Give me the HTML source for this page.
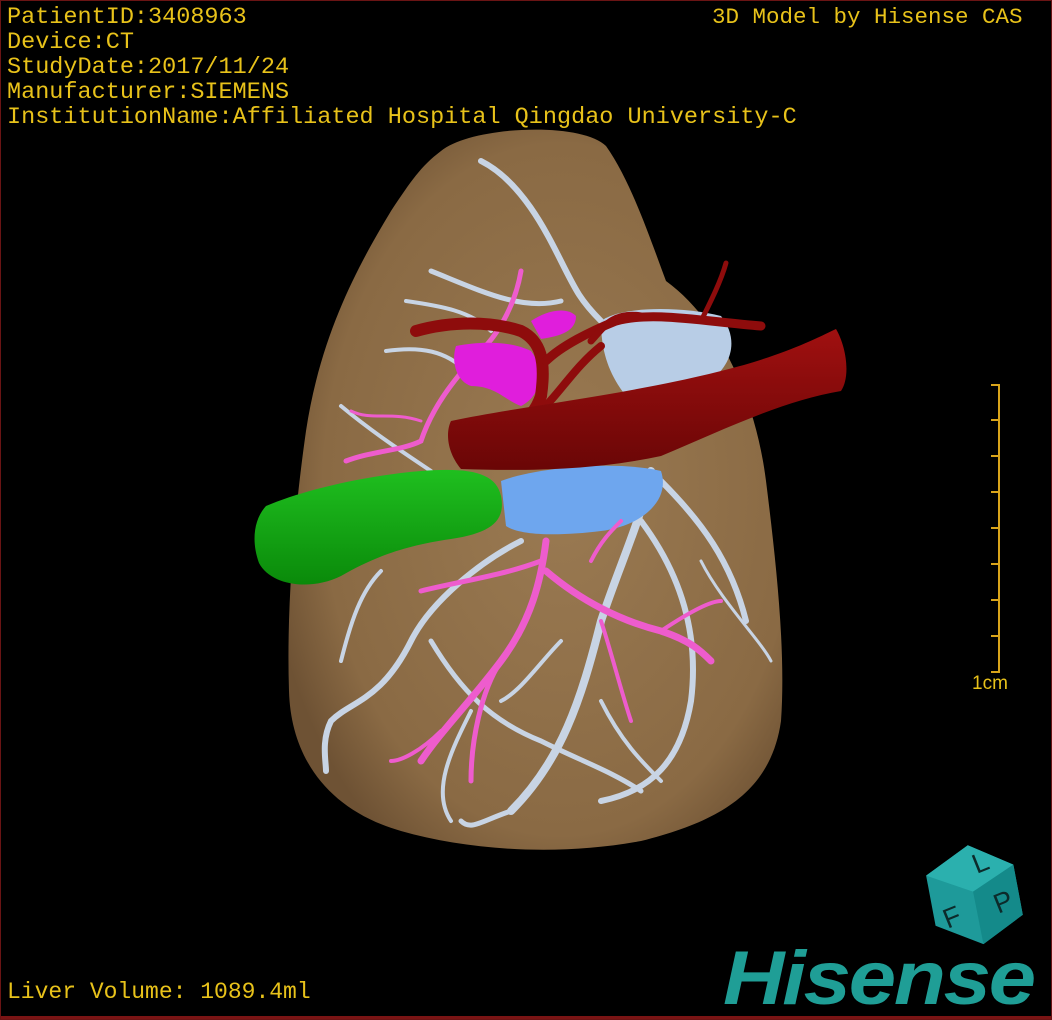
<!DOCTYPE html>
<html><head><meta charset="utf-8"><style>
html,body{margin:0;padding:0;background:#000}
#c{position:relative;width:1052px;height:1020px;background:#000;overflow:hidden;box-sizing:border-box;border:1px solid #6a1414}
.t{position:absolute;color:#e8c21a;font-family:"Liberation Mono",monospace;font-size:23.5px;line-height:25px;white-space:nowrap}
</style></head><body><div id="c">
<svg width="1052" height="1020" style="position:absolute;left:0;top:0">
<defs>
<radialGradient id="lv" cx="0.55" cy="0.5" r="0.6"><stop offset="0" stop-color="#9a7a52"/><stop offset="0.8" stop-color="#8a6a44"/><stop offset="1" stop-color="#6e5234"/></radialGradient>
<linearGradient id="gr" x1="0" y1="0" x2="0" y2="1"><stop offset="0" stop-color="#1fbf1f"/><stop offset="1" stop-color="#0a8a0a"/></linearGradient>
<linearGradient id="rd" x1="0" y1="0" x2="0" y2="1"><stop offset="0" stop-color="#a01010"/><stop offset="1" stop-color="#6a0606"/></linearGradient>
</defs>
<path d="M440,150 C470,125 580,120 605,145 C630,180 650,240 665,280 C720,320 755,400 765,480 C775,560 785,650 780,720 C770,790 720,820 640,840 C560,855 470,850 400,830 C330,810 290,760 288,690 C285,600 295,500 305,430 C320,330 360,260 390,210 C410,180 420,165 440,150 Z" fill="url(#lv)"/>
<g fill="none" stroke="#c8d4e4" stroke-linecap="round">
<path d="M480,160 C520,180 545,230 560,260 C575,290 580,300 600,320" stroke-width="6"/>
<path d="M430,270 C480,290 520,310 560,300" stroke-width="5"/>
<path d="M405,300 C440,305 470,310 490,330" stroke-width="4"/>
<path d="M385,350 C420,345 445,350 465,370" stroke-width="4"/>
<path d="M340,405 C370,430 400,450 430,470" stroke-width="4"/>
<path d="M650,470 C640,520 620,560 600,620 C580,700 560,760 510,810" stroke-width="8"/>
<path d="M660,480 C700,520 730,560 745,620" stroke-width="6"/>
<path d="M640,520 C670,560 700,620 690,700 C680,760 650,790 600,800" stroke-width="6"/>
<path d="M520,540 C480,560 430,600 410,640 C380,700 350,700 330,720 C320,740 325,760 325,770" stroke-width="6"/>
<path d="M430,640 C460,690 490,720 540,740 C580,760 610,770 640,790" stroke-width="5"/>
<path d="M380,570 C360,590 350,620 340,660" stroke-width="4"/>
<path d="M470,710 C450,750 430,790 450,820" stroke-width="4"/>
<path d="M560,640 C540,660 520,690 500,700" stroke-width="4"/>
<path d="M600,700 C620,740 640,760 660,780" stroke-width="4"/>
<path d="M510,810 C480,820 470,830 460,820" stroke-width="5"/>
<path d="M700,560 C720,600 760,640 770,660" stroke-width="3"/>
</g>
<path d="M600,320 C620,305 680,305 720,315 C740,340 730,370 700,385 C670,395 640,400 625,395 C605,370 600,345 600,320 Z" fill="#b8cde6"/>
<path d="M500,480 C540,465 620,460 660,470 C670,500 640,525 600,530 C560,535 520,535 505,525 Z" fill="#6ea6ee"/>
<g fill="none" stroke="#ee5ccd" stroke-linecap="round">
<path d="M545,540 C540,580 530,620 500,660 C470,700 440,730 420,760" stroke-width="7"/>
<path d="M545,570 C580,600 620,620 660,630 C690,640 700,650 710,660" stroke-width="7"/>
<path d="M540,560 C500,575 460,580 420,590" stroke-width="5"/>
<path d="M500,660 C480,690 470,740 470,780" stroke-width="5"/>
<path d="M600,620 C610,650 620,690 630,720" stroke-width="4"/>
<path d="M660,630 C690,610 710,600 720,600" stroke-width="4"/>
<path d="M440,730 C420,750 400,760 390,760" stroke-width="4"/>
<path d="M520,270 C515,300 500,330 480,350 C450,380 430,410 420,440 C400,450 370,450 345,460" stroke-width="5"/>
<path d="M420,420 C390,410 370,420 350,410" stroke-width="3"/>
<path d="M590,560 C600,540 610,530 620,520" stroke-width="4"/>
</g>
<path d="M455,345 C480,340 510,340 530,350 C545,370 540,395 520,405 C505,400 495,385 470,385 C455,380 450,360 455,345 Z" fill="#e01edc"/>
<path d="M530,320 C545,310 565,305 575,315 C575,330 560,335 540,338 Z" fill="#e01edc"/>
<g fill="none" stroke="#8e0c0c" stroke-linecap="round">
<path d="M415,330 C450,320 490,320 520,330 C540,340 545,360 540,395 C535,410 525,420 520,420" stroke-width="12"/>
<path d="M545,360 C560,345 590,330 615,320 C650,310 700,320 760,325" stroke-width="9"/>
<path d="M590,340 C600,330 610,310 640,315" stroke-width="7"/>
<path d="M700,320 C710,300 720,280 725,262" stroke-width="5"/>
<path d="M600,345 C575,365 560,390 540,410" stroke-width="8"/>
</g>
<path d="M450,420 C520,405 620,395 720,370 C780,355 810,340 835,328 C845,345 850,375 840,390 C780,400 720,430 660,455 C590,470 520,470 460,468 C445,450 445,430 450,420 Z" fill="url(#rd)"/>
<path d="M265,505 C300,490 360,475 420,470 C470,466 495,472 500,495 C505,520 490,532 450,538 C400,545 370,558 340,575 C310,590 270,585 258,562 C250,540 253,518 265,505 Z" fill="url(#gr)"/>
<g stroke="#d9a41a" stroke-width="2" fill="none">
<path d="M998,383 V672 M990,384 H998 M990,419 H998 M990,455 H998 M990,491 H998 M990,527 H998 M990,563 H998 M990,599 H998 M990,635 H998 M990,671 H998"/>
</g>
<g transform="translate(973,893) rotate(-22) scale(1.25)">
<polygon points="-30,-28 10,-38 38,-10 30,30 -8,40 -38,12" fill="#1e9a9a"/>
<polygon points="-30,-28 10,-38 38,-10 0,-2" fill="#2bb0ae"/>
<polygon points="0,-2 38,-10 30,30 -8,40" fill="#148a8a"/>
<text x="8" y="-14" font-family="Liberation Sans" font-size="22" fill="#0c2b2b">L</text>
<text x="12" y="22" font-family="Liberation Sans" font-size="22" fill="#0c2b2b">P</text>
<text x="-30" y="18" font-family="Liberation Sans" font-size="22" fill="#0c2b2b">F</text>
</g>
</svg>
<div class="t" style="left:6px;top:4px">PatientID:3408963<br>Device:CT<br>StudyDate:2017/11/24<br>Manufacturer:SIEMENS<br>InstitutionName:Affiliated Hospital Qingdao University-C</div>
<div class="t" style="left:711px;top:4px;font-size:22.5px">3D Model by Hisense CAS</div>
<div class="t" style="left:6px;top:979px;font-size:23px">Liver Volume: 1089.4ml</div>
<div style="position:absolute;left:971px;top:672px;color:#e8c21a;font-family:'Liberation Sans',sans-serif;font-size:19px">1cm</div>
<div style="position:absolute;left:722px;top:938px;color:#1f9e96;font-family:'Liberation Sans',sans-serif;font-weight:bold;font-style:italic;font-size:76px;line-height:80px;letter-spacing:-2px;transform:scaleX(1.12);transform-origin:left">Hisense</div>
<div style="position:absolute;left:0;top:1015px;width:1052px;height:3px;background:#7a1414"></div>
</div></body></html>
